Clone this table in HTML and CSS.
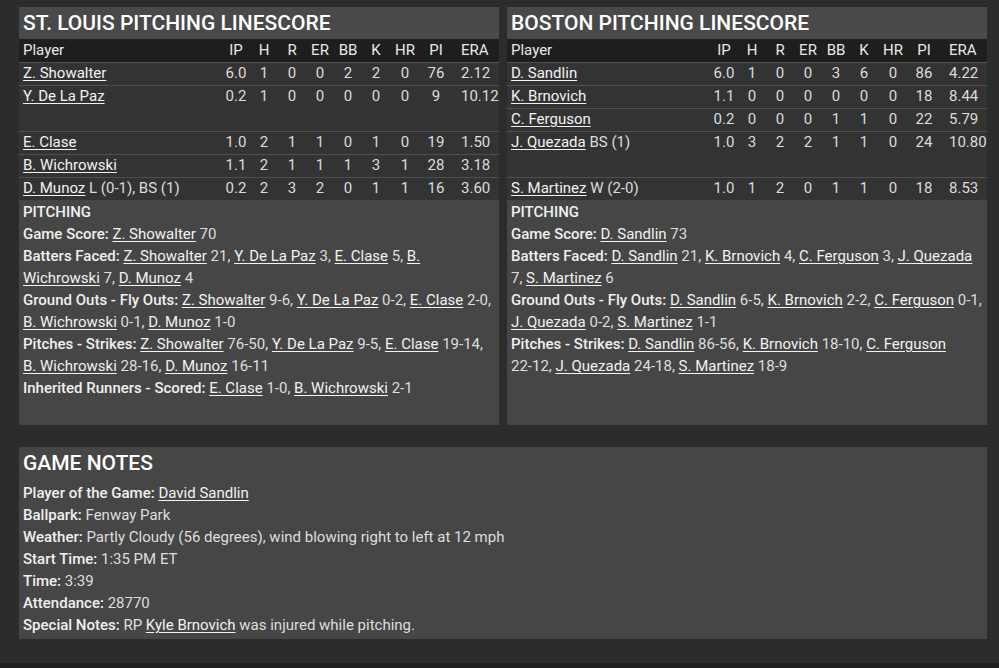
FILE: index.html
```html
<!DOCTYPE html>
<html>
<head>
<meta charset="utf-8">
<link rel="stylesheet" href="styles.css">
</head>
<body>
<div class="page">
  <div class="top">
    <section class="panel">
      <h2 class="title">ST. LOUIS PITCHING LINESCORE</h2>
      <table class="ls">
        <colgroup><col><col class="c"><col class="c"><col class="c"><col class="c"><col class="c"><col class="c"><col class="chr"><col class="cpi"><col class="cera"></colgroup>
        <thead><tr><th class="pl">Player</th><th>IP</th><th>H</th><th>R</th><th>ER</th><th>BB</th><th>K</th><th>HR</th><th>PI</th><th class="era">ERA</th></tr></thead>
        <tbody>
          <tr><td class="pl"><a>Z. Showalter</a></td><td>6.0</td><td>1</td><td>0</td><td>0</td><td>2</td><td>2</td><td>0</td><td>76</td><td class="era">2.12</td></tr>
          <tr class="tall"><td class="pl"><a>Y. De La Paz</a></td><td>0.2</td><td>1</td><td>0</td><td>0</td><td>0</td><td>0</td><td>0</td><td>9</td><td class="era">10.12</td></tr>
          <tr><td class="pl"><a>E. Clase</a></td><td>1.0</td><td>2</td><td>1</td><td>1</td><td>0</td><td>1</td><td>0</td><td>19</td><td class="era">1.50</td></tr>
          <tr><td class="pl"><a>B. Wichrowski</a></td><td>1.1</td><td>2</td><td>1</td><td>1</td><td>1</td><td>3</td><td>1</td><td>28</td><td class="era">3.18</td></tr>
          <tr><td class="pl"><a>D. Munoz</a> L (0-1), BS (1)</td><td>0.2</td><td>2</td><td>3</td><td>2</td><td>0</td><td>1</td><td>1</td><td>16</td><td class="era">3.60</td></tr>
        </tbody>
      </table>
      <div class="notes">
        <p><b>PITCHING</b></p>
        <p><b>Game Score:</b> <a>Z. Showalter</a> 70</p>
        <p><b>Batters Faced:</b> <a>Z. Showalter</a> 21, <a>Y. De La Paz</a> 3, <a>E. Clase</a> 5, <a>B. Wichrowski</a> 7, <a>D. Munoz</a> 4</p>
        <p><b>Ground Outs - Fly Outs:</b> <a>Z. Showalter</a> <span class="n">9-6,</span> <a>Y. De La Paz</a> <span class="n">0-2,</span> <a>E. Clase</a> <span class="n">2-0,</span> <a>B. Wichrowski</a> <span class="n">0-1,</span> <a>D. Munoz</a> <span class="n">1-0</span></p>
        <p><b>Pitches - Strikes:</b> <a>Z. Showalter</a> <span class="n">76-50,</span> <a>Y. De La Paz</a> <span class="n">9-5,</span> <a>E. Clase</a> <span class="n">19-14,</span> <a>B. Wichrowski</a> <span class="n">28-16,</span> <a>D. Munoz</a> <span class="n">16-11</span></p>
        <p><b>Inherited Runners - Scored:</b> <a>E. Clase</a> <span class="n">1-0,</span> <a>B. Wichrowski</a> <span class="n">2-1</span></p>
      </div>
    </section>
    <section class="panel">
      <h2 class="title">BOSTON PITCHING LINESCORE</h2>
      <table class="ls">
        <colgroup><col><col class="c"><col class="c"><col class="c"><col class="c"><col class="c"><col class="c"><col class="chr"><col class="cpi"><col class="cera"></colgroup>
        <thead><tr><th class="pl">Player</th><th>IP</th><th>H</th><th>R</th><th>ER</th><th>BB</th><th>K</th><th>HR</th><th>PI</th><th class="era">ERA</th></tr></thead>
        <tbody>
          <tr><td class="pl"><a>D. Sandlin</a></td><td>6.0</td><td>1</td><td>0</td><td>0</td><td>3</td><td>6</td><td>0</td><td>86</td><td class="era">4.22</td></tr>
          <tr><td class="pl"><a>K. Brnovich</a></td><td>1.1</td><td>0</td><td>0</td><td>0</td><td>0</td><td>0</td><td>0</td><td>18</td><td class="era">8.44</td></tr>
          <tr><td class="pl"><a>C. Ferguson</a></td><td>0.2</td><td>0</td><td>0</td><td>0</td><td>1</td><td>1</td><td>0</td><td>22</td><td class="era">5.79</td></tr>
          <tr class="tall"><td class="pl"><a>J. Quezada</a> BS (1)</td><td>1.0</td><td>3</td><td>2</td><td>2</td><td>1</td><td>1</td><td>0</td><td>24</td><td class="era">10.80</td></tr>
          <tr><td class="pl"><a>S. Martinez</a> W (2-0)</td><td>1.0</td><td>1</td><td>2</td><td>0</td><td>1</td><td>1</td><td>0</td><td>18</td><td class="era">8.53</td></tr>
        </tbody>
      </table>
      <div class="notes">
        <p><b>PITCHING</b></p>
        <p><b>Game Score:</b> <a>D. Sandlin</a> 73</p>
        <p><b>Batters Faced:</b> <a>D. Sandlin</a> 21, <a>K. Brnovich</a> 4, <a>C. Ferguson</a> 3, <a>J. Quezada</a> 7, <a>S. Martinez</a> 6</p>
        <p><b>Ground Outs - Fly Outs:</b> <a>D. Sandlin</a> <span class="n">6-5,</span> <a>K. Brnovich</a> <span class="n">2-2,</span> <a>C. Ferguson</a> <span class="n">0-1,</span> <a>J. Quezada</a> <span class="n">0-2,</span> <a>S. Martinez</a> <span class="n">1-1</span></p>
        <p><b>Pitches - Strikes:</b> <a>D. Sandlin</a> <span class="n">86-56,</span> <a>K. Brnovich</a> <span class="n">18-10,</span> <a>C. Ferguson</a> <span class="n">22-12,</span> <a>J. Quezada</a> <span class="n">24-18,</span> <a>S. Martinez</a> <span class="n">18-9</span></p>
      </div>
    </section>
  </div>
  <section class="panel game">
    <h2 class="title plain">GAME NOTES</h2>
    <div class="gnotes">
      <p><b>Player of the Game:</b> <a>David Sandlin</a></p>
      <p><b>Ballpark:</b> Fenway Park</p>
      <p><b>Weather:</b> Partly Cloudy (56 degrees), wind blowing right to left at 12 mph</p>
      <p><b>Start Time:</b> 1:35 PM ET</p>
      <p><b>Time:</b> 3:39</p>
      <p><b>Attendance:</b> 28770</p>
      <p><b>Special Notes:</b> RP <a>Kyle Brnovich</a> was injured while pitching.</p>
    </div>
  </section>
</div>
</body>
</html>
```
FILE: styles.css
```css
html, body {
  margin: 0;
  padding: 0;
  background: #2b2c2c;
  font-family: Roboto, "Noto Sans", sans-serif;
  color: #dedede;
  font-size: 15px;
}
.page {
  padding: 7px 12px 24px 19px;
  border-bottom: 5px solid #1f2020;
}
.top {
  display: grid;
  grid-template-columns: 480px 480px;
  gap: 8px;
}
.panel {
  background: #464646;
  display: flex;
  flex-direction: column;
}
.top .panel {
  min-height: 418px;
}
.title {
  margin: 0;
  background: #494949;
  color: #ffffff;
  font-size: 21px;
  font-weight: 500;
  line-height: 32px;
  height: 32px;
  padding: 0 4px;
}
.title.plain {
  background: transparent;
}
.ls {
  width: 480px;
  border-collapse: collapse;
  table-layout: fixed;
}
.ls col.c { width: 28px; }
.ls col.chr { width: 30px; }
.ls col.cpi { width: 32px; }
.ls col.cera { width: 47px; }
.ls th {
  background: #1e1e1e;
  font-weight: 400;
  color: #e8e8e8;
  height: 23px;
  line-height: 23px;
  padding: 0;
  text-align: center;
  white-space: nowrap;
}
.ls td {
  background: #333333;
  border-top: 1px solid #4f4f4f;
  height: 22px;
  line-height: 20px;
  padding: 0;
  text-align: center;
  vertical-align: top;
  white-space: nowrap;
  color: #dcdcdc;
}
.ls tr.tall td {
  height: 45px;
}
.ls .pl {
  text-align: left;
  padding-left: 4px;
}
.ls .era {
  text-align: left;
  padding-left: 9px;
}
a {
  color: #f2f2f2;
  text-decoration: underline;
  text-underline-offset: 2px;
}
.n {
  white-space: nowrap;
}
.notes {
  padding: 1px 4px 4px;
  flex: 1;
}
.notes p, .gnotes p {
  margin: 0;
  line-height: 22px;
}
b {
  font-weight: 500;
  color: #f0f0f0;
}
.game {
  margin-top: 22px;
  width: 968px;
}
.gnotes {
  padding: 3px 4px 3px;
}
```
